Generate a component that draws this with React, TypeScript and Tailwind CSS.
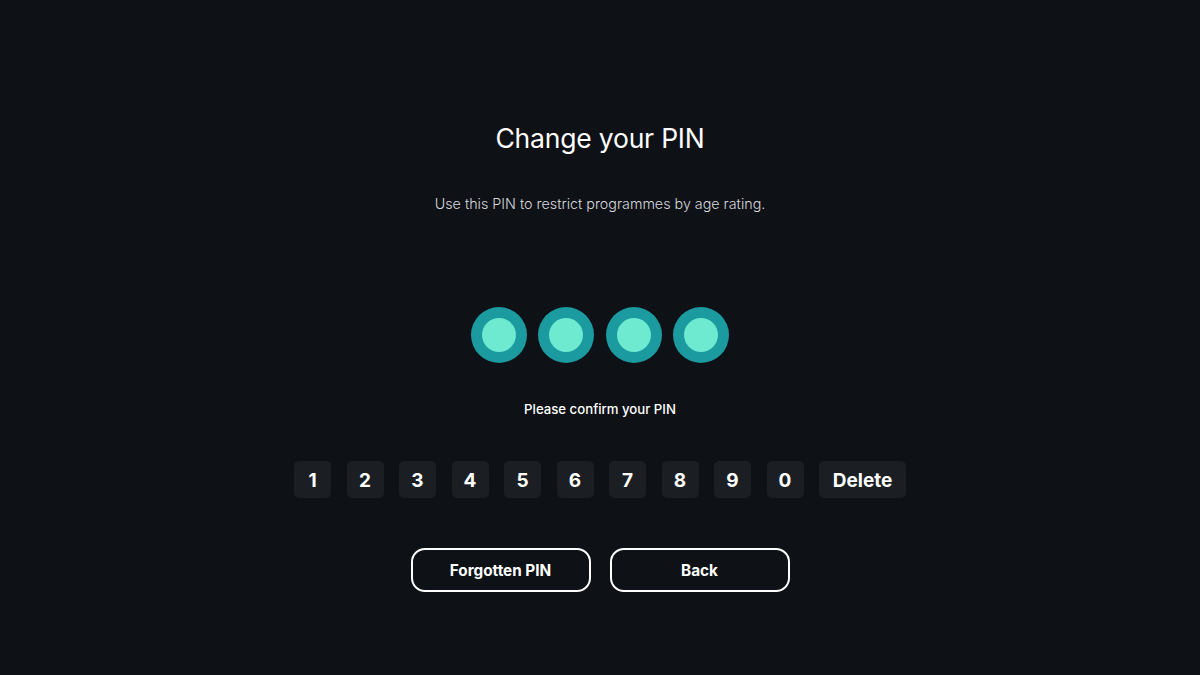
import React from 'react';

const KEYS = ['1', '2', '3', '4', '5', '6', '7', '8', '9', '0'];

function PinDot(): React.ReactElement {
  return (
    <div className="flex h-[56px] w-[56px] items-center justify-center rounded-full bg-[#1b9aa0]">
      <div className="h-[34px] w-[34px] rounded-full bg-[#6deacf]" />
    </div>
  );
}

function Key({ label, wide }: { label: string; wide?: boolean }): React.ReactElement {
  return (
    <button
      type="button"
      className={`flex h-[37px] items-center justify-center rounded-[5px] bg-[#1b1e22] pt-[3px] text-[19px] font-bold text-white ${
        wide ? 'w-[87px]' : 'w-[37px]'
      }`}
    >
      {label}
    </button>
  );
}

function OutlineButton({ label }: { label: string }): React.ReactElement {
  return (
    <button
      type="button"
      className="flex h-[44px] w-[180px] items-center justify-center rounded-[14px] border-2 border-white pt-[2px] text-[15.3px] font-bold text-white"
    >
      {label}
    </button>
  );
}

export default function App(): React.ReactElement {
  return (
    <div
      className="flex h-[675px] w-[1200px] flex-col items-center bg-[#0e1116] pt-[118px] text-white"
      style={{ fontFamily: 'Inter, "Noto Sans", sans-serif' }}
    >
      <h1 className="text-[26.5px] font-normal leading-[40px] tracking-[-0.2px]">Change your PIN</h1>
      <p className="mt-[36px] text-[14.3px] font-light leading-[20px] text-[#d6d8dc]">
        Use this PIN to restrict programmes by age rating.
      </p>

      <div className="mt-[93px] flex gap-[11.3px]">
        <PinDot />
        <PinDot />
        <PinDot />
        <PinDot />
      </div>

      <p className="mt-[36px] text-[13.2px] font-medium leading-[20px]">Please confirm your PIN</p>

      <div className="mt-[42px] flex gap-[15.5px]">
        {KEYS.map((k) => (
          <Key key={k} label={k} />
        ))}
        <Key label="Delete" wide />
      </div>

      <div className="mt-[50px] flex gap-[19px]">
        <OutlineButton label="Forgotten PIN" />
        <OutlineButton label="Back" />
      </div>
    </div>
  );
}
